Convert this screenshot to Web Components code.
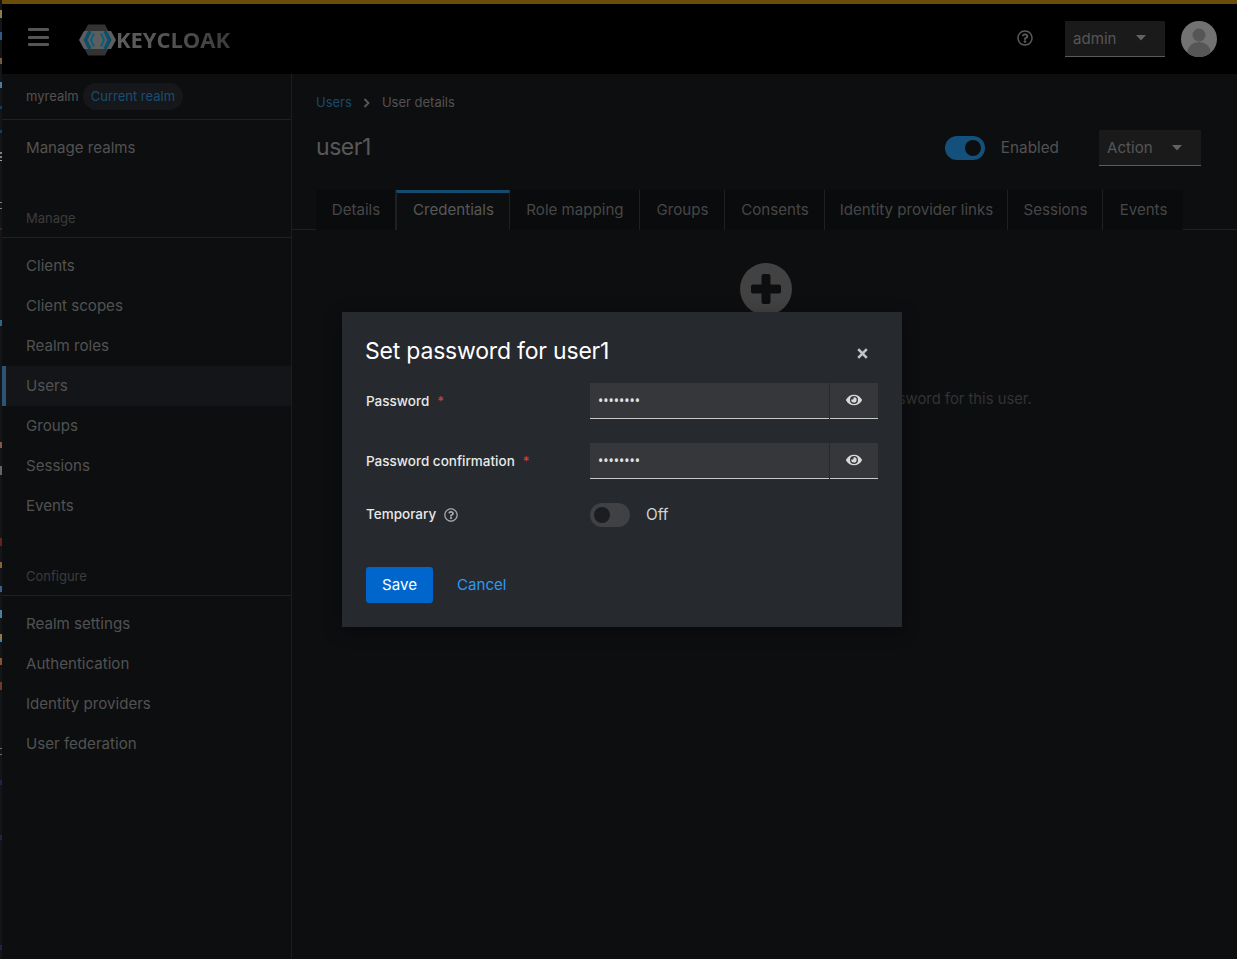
<!DOCTYPE html>
<html lang="en">
<head>
<meta charset="utf-8">
<title>Keycloak</title>
<style>
    html, body { margin: 0; height: 100%; background: #0d0e10; overflow: hidden; }
    body { font-family: Inter, "Liberation Sans", sans-serif; }
</style>
</head>
<body>
<kc-app></kc-app>

<script>
const ICONS = {
    eye: '<svg viewBox="0 0 576 512" width="16" height="16" fill="currentColor"><path d="M572.52 241.4C518.29 135.59 410.93 64 288 64S57.68 135.64 3.48 241.41a32.35 32.35 0 0 0 0 29.19C57.71 376.41 165.07 448 288 448s230.32-71.64 284.52-177.41a32.35 32.35 0 0 0 0-29.19zM288 400a144 144 0 1 1 144-144 143.93 143.93 0 0 1-144 144zm0-240a95.31 95.31 0 0 0-25.31 3.79 47.85 47.85 0 0 1-66.9 66.9A95.78 95.78 0 1 0 288 160z"/></svg>',
    help: '<svg viewBox="0 0 512 512" width="100%" height="100%" fill="currentColor"><path d="M256 8C119.043 8 8 119.083 8 256c0 136.997 111.043 248 248 248s248-111.003 248-248C504 119.083 392.957 8 256 8zm0 448c-110.532 0-200-89.431-200-200 0-110.495 89.472-200 200-200 110.491 0 200 89.471 200 200 0 110.53-89.431 200-200 200zm107.244-255.2c0 67.052-72.421 68.084-72.421 92.863V300c0 6.627-5.373 12-12 12h-45.647c-6.627 0-12-5.373-12-12v-8.659c0-35.745 27.1-50.034 47.579-61.516 17.561-9.845 28.324-16.541 28.324-29.579 0-17.246-21.999-28.693-39.784-28.693-23.189 0-33.894 10.977-48.942 29.969-4.057 5.12-11.46 6.071-16.666 2.124l-27.824-21.098c-5.107-3.872-6.251-11.066-2.644-16.363C184.846 131.491 214.94 112 261.794 112c49.071 0 101.45 38.304 101.45 88.8zM298 368c0 23.159-18.841 42-42 42s-42-18.841-42-42 18.841-42 42-42 42 18.841 42 42z"/></svg>',
    caret: '<svg viewBox="0 0 10 6" width="10" height="6" fill="currentColor"><path d="M0 0h10L5 5.6z"/></svg>'
};

class KcDropdown extends HTMLElement {
    constructor() {
        super();
        this.attachShadow({ mode: 'open' });
        this.shadowRoot.innerHTML = `
            <style>
                :host { display: inline-flex; align-items: center; justify-content: space-between; box-sizing: border-box;
                    height: 36px; padding: 0 19px 0 8px; background: #1a1a1a; border-bottom: 1px solid #5b5b5b;
                    color: #565656; font-size: 15.1px; }
                svg { color: #636363; display: block; }
            </style>
            <slot></slot>${ICONS.caret}
        `;
    }
}

class KcSwitch extends HTMLElement {
    constructor() {
        super();
        this.attachShadow({ mode: 'open' });
        this.shadowRoot.innerHTML = `
            <style>
                :host { display: inline-flex; align-items: center; gap: 16px; font-size: 15.3px; color: var(--switch-label, #525252); }
                .track { width: 40px; height: 24px; border-radius: 12px; background: var(--switch-track, #14507c); flex: none;
                    display: flex; align-items: center; padding: 0 4px; box-sizing: border-box; }
                :host([on]) .track { justify-content: flex-end; }
                .knob { width: 16px; height: 16px; border-radius: 50%; background: var(--switch-knob, #0d0e10); }
                .text { padding-bottom: 2px; }
            </style>
            <span class="track"><span class="knob"></span></span><span class="text"><slot></slot></span>
        `;
    }
}

class KcMasthead extends HTMLElement {
    constructor() {
        super();
        this.attachShadow({ mode: 'open' });
        this.shadowRoot.innerHTML = `
            <style>
                :host { display: flex; align-items: center; height: 70px; background: #000; flex: none; padding: 0 20px 0 28px; box-sizing: border-box; }
                .burger { width: 21px; display: grid; gap: 4.5px; margin-top: -4px; }
                .burger i { display: block; height: 3px; background: #555; border-radius: 1px; }
                .logo { display: flex; align-items: center; margin-left: 30px; margin-top: 1px; }
                .word { font: 700 22px "Open Sans", sans-serif; letter-spacing: -.05px; margin-top: -2px;
                    background: linear-gradient(90deg, #5e5e5e 0, #565656 40%, #3a3a3a 100%); -webkit-background-clip: text; background-clip: text; color: transparent; }
                .right { margin-left: auto; display: flex; align-items: center; }
                .help { width: 16px; height: 16px; color: #5a5a5a; margin-right: 32px; margin-top: -3px; }
                kc-dropdown { width: 100px; margin-top: -1px; }
                .avatar { margin-left: 16px; display: block; }
            </style>
            <div class="burger"><i></i><i></i><i></i></div>
            <div class="logo">
                <svg width="37" height="32" viewBox="0 0 37 32">
                    <path d="M9 .5h17l8 15.5-8 15.5H9L1 16z" fill="#333"/>
                    <path d="M0 16 5 7h27l5 9-5 9H5z" fill="#5e5e5e"/>
                    <path d="M11 7 6.500 16l4.500 9M26 7l4.500 9-4.500 9" fill="none" stroke="#0c4f6a" stroke-width="3.600"/>
                    <path d="M15 9.500 12 16l3 6.500M22 9.500l3 6.500-3 6.500" fill="none" stroke="#0b5f7c" stroke-width="2"/>
                </svg>
                <span class="word">KEYCLOAK</span>
            </div>
            <div class="right">
                <div class="help">${ICONS.help}</div>
                <kc-dropdown>admin</kc-dropdown>
                <svg class="avatar" width="36" height="36" viewBox="0 0 36 36">
                    <defs><clipPath id="c"><circle cx="18" cy="18" r="18"/></clipPath></defs>
                    <circle cx="18" cy="18" r="18" fill="#727272"/>
                    <g clip-path="url(#c)" fill="#565656"><circle cx="18" cy="14" r="6.500"/><ellipse cx="18" cy="31" rx="11.500" ry="10"/></g>
                </svg>
            </div>
        `;
    }
}

class KcSidebar extends HTMLElement {
    constructor() {
        super();
        this.attachShadow({ mode: 'open' });
        const item = (label, active) => `<a class="item${active ? ' active' : ''}">${label}</a>`;
        const section = (title, labels) => `
            <div class="title">${title}</div>
            <div class="group">${labels.map(l => item(l, l === 'Users')).join('')}</div>`;
        this.shadowRoot.innerHTML = `
            <style>
                :host { display: block; width: 292px; flex: none; box-sizing: border-box; border-right: 1px solid #1c1d20; font-size: 15.1px; color: #525252; }
                .realm { height: 46px; box-sizing: border-box; border-bottom: 1px solid #1f2023; display: flex; align-items: center; padding-left: 26px; font-size: 13px; }
                .realm > span:first-child { padding-bottom: 2px; }
                .chip { margin-left: 4px; height: 27px; box-sizing: border-box; padding: 0 8px 2px; border-radius: 14px; background: #15171a; color: #1a4d70; display: flex; align-items: center; }
                .group { margin-top: 7px; }
                .item { display: flex; align-items: center; height: 40px; padding-left: 26px; }
                .item.active { background: linear-gradient(transparent 1px, #141518 1px); box-shadow: 0 1px 0 #141518; position: relative; }
                .item.active::before { content: ""; position: absolute; left: 0; top: 0; bottom: -1px; width: 6px; background: #0d0e10; }
                .item.active::after { content: ""; position: absolute; left: 2px; top: 1px; bottom: -1px; width: 4px; background: #2c5574; }
                .title { height: 71px; box-sizing: border-box; display: flex; align-items: flex-end; padding: 0 0 8px 26px; border-bottom: 1px solid #1f2023; font-size: 13px; line-height: 21px; color: #3c3c3c; }
            </style>
            <div class="realm"><span>myrealm</span><span class="chip">Current realm</span></div>
            <div class="group">${item('Manage realms')}</div>
            ${section('Manage', ['Clients', 'Client scopes', 'Realm roles', 'Users', 'Groups', 'Sessions', 'Events'])}
            ${section('Configure', ['Realm settings', 'Authentication', 'Identity providers', 'User federation'])}
        `;
    }
}

class KcTabs extends HTMLElement {
    constructor() {
        super();
        this.attachShadow({ mode: 'open' });
        const tabs = [['Details', 80], ['Credentials', 114, true], ['Role mapping', 130], ['Groups', 85], ['Consents', 100],
            ['Identity provider links', 183], ['Sessions', 95], ['Events', 80]];
        this.shadowRoot.innerHTML = `
            <style>
                :host { display: flex; height: 40px; box-sizing: border-box; padding-left: 24px; border-bottom: 1px solid #1f2023; font-size: 15.1px; color: #474747; }
                .tab { display: flex; align-items: center; justify-content: center; height: 40px; box-sizing: border-box; background: #0a0b0d; border-right: 1px solid #1f2023; white-space: nowrap; padding: 0 0 2px 1px; }
                .tab:last-child { border-right: 0; }
                .tab.on { background: #0d0e10; color: #585858; border-left: 1px solid #1f2023; border-top: 3px solid #144b6e; padding-bottom: 5px; }
            </style>
            ${tabs.map(([label, w, on]) => `<div class="tab${on ? ' on' : ''}" style="width:${w}px">${label}</div>`).join('')}
        `;
    }
}

class KcUserPage extends HTMLElement {
    constructor() {
        super();
        this.attachShadow({ mode: 'open' });
        this.shadowRoot.innerHTML = `
            <style>
                :host { display: block; flex: 1; min-width: 0; color: #525252; }
                .crumbs { display: flex; align-items: center; padding: 18px 0 0 24px; font-size: 13px; line-height: 21px; }
                .crumbs a { color: #1a4a6b; }
                .crumbs svg { margin: 0 12px 0 11px; }
                .head { display: flex; align-items: center; padding: 17px 36px 0 24px; height: 36px; }
                h1 { margin: -2px 0 0; font: 400 23px Inter, sans-serif; color: #585858; letter-spacing: -.45px; }
                kc-switch { margin-left: auto; }
                kc-dropdown { width: 102px; margin-left: 40px; }
                kc-tabs { margin-top: 24px; }
                .empty { display: flex; flex-direction: column; align-items: center; padding: 33px 0 0 3px; }
                .plus { width: 52px; height: 52px; border-radius: 50%; background: #424242; display: flex; align-items: center; justify-content: center; }
                p { margin: 72px 0 0; font-size: 14.8px; line-height: 24px; color: #333; white-space: nowrap; }
            </style>
            <div class="crumbs"><a>Users</a>
                <svg width="7" height="10" viewBox="0 0 7 10"><path d="M1.500 1l4 4-4 4" fill="none" stroke="#5a5a5a" stroke-width="1.800"/></svg>
                <span>User details</span></div>
            <div class="head">
                <h1>user1</h1>
                <kc-switch on>Enabled</kc-switch>
                <kc-dropdown>Action</kc-dropdown>
            </div>
            <kc-tabs></kc-tabs>
            <div class="empty">
                <div class="plus"><svg width="32" height="32" viewBox="0 0 32 32"><path d="M11.500 3a2 2 0 0 1 2-2h5a2 2 0 0 1 2 2v8.500H29a2 2 0 0 1 2 2v5a2 2 0 0 1-2 2h-8.500V29a2 2 0 0 1-2 2h-5a2 2 0 0 1-2-2v-8.500H3a2 2 0 0 1-2-2v-5a2 2 0 0 1 2-2h8.500z" fill="#0d0e10"/></svg></div>
                <p>This user does not have any credentials. You can set password for this user.</p>
            </div>
        `;
    }
}

class KcPasswordField extends HTMLElement {
    constructor() {
        super();
        this.attachShadow({ mode: 'open' });
        this.shadowRoot.innerHTML = `
            <style>
                :host { display: flex; gap: 1px; height: 36px; width: 288px; }
                input { flex: 1; min-width: 0; box-sizing: border-box; height: 36px; border: 0; border-bottom: 1px solid #c8c8c8; background: #36373b;
                    color: #e0e0e0; padding: 0 8px; font: 14px "Noto Sans", sans-serif; outline: 0; }
                button { width: 48px; height: 36px; box-sizing: border-box; border: 0; border-bottom: 1px solid #c8c8c8; background: #36373b; color: #d8d8d8;
                    display: flex; align-items: center; justify-content: center; padding: 0 0 2px; }
            </style>
            <input type="password" value="password"><button>${ICONS.eye}</button>
        `;
    }
}

class KcPasswordModal extends HTMLElement {
    constructor() {
        super();
        this.attachShadow({ mode: 'open' });
        this.shadowRoot.innerHTML = `
            <style>
                :host { display: block; position: absolute; left: 342px; top: 312px; width: 560px; box-sizing: border-box; padding: 24px; background: #26292d;
                    color: #e0e0e0; box-shadow: 0 4px 16px rgba(0,0,0,.4); font-size: 15.1px; }
                header { display: flex; align-items: center; justify-content: space-between; height: 30px; margin-bottom: 17px; }
                h2 { margin: 0 0 0 -1px; font: 400 23px Inter, sans-serif; letter-spacing: -.2px; color: #fff; }
                .close { margin: 4px 10px 0 0; display: block; }
                .form { display: grid; grid-template-columns: 224px 1fr; row-gap: 24px; align-items: center; }
                label { font-size: 13.5px; font-weight: 500; color: #e8e8e8; display: flex; align-items: center; white-space: nowrap; }
                .top { align-self: start; padding-top: 10px; }
                .req { color: #c9413a; margin-left: 8px; font-size: 13px; }
                .q { width: 14px; height: 14px; color: #a8a8a8; margin: 2px 0 0 8px; }
                .temp { margin-bottom: 3px; }
                kc-switch { --switch-label: #d4d4d4; --switch-track: #3f4145; --switch-knob: #1b1d21; }
                footer { display: flex; align-items: center; gap: 24px; margin-top: 40px; }
                .save { height: 36px; width: 67px; box-sizing: border-box; padding-bottom: 2px; background: #0066cc; border-radius: 3px; color: #fff; display: flex; align-items: center; justify-content: center; }
                .cancel { color: #2b9af3; padding-bottom: 2px; }
            </style>
            <header>
                <h2>Set password for user1</h2>
                <svg class="close" width="11" height="11" viewBox="0 0 11 11"><path d="M1.200 1.200l8.600 8.600M9.800 1.200l-8.600 8.600" stroke="#c4c4c4" stroke-width="2.600"/></svg>
            </header>
            <div class="form">
                <label class="top">Password<span class="req">*</span></label><kc-password-field></kc-password-field>
                <label class="top">Password confirmation<span class="req">*</span></label><kc-password-field></kc-password-field>
                <label class="temp">Temporary<span class="q">${ICONS.help}</span></label><kc-switch>Off</kc-switch>
            </div>
            <footer><span class="save">Save</span><span class="cancel">Cancel</span></footer>
        `;
    }
}

// one to two pixels of coloured noise down the left edge of the window
const EDGE_NOISE = [[10, 18, '#8a7a50'], [32, 40, '#2e5a84'], [58, 64, '#6e5c3a'], [82, 88, '#487ca0'], [106, 109, '#1c3a66'],
    [130, 133, '#1c3a66'], [152, 154, '#808080'], [156, 158, '#808080'], [160, 161, '#a0a0a0'], [202, 203, '#808080'], [208, 209, '#808080'],
    [228, 230, '#4a1c1c'], [320, 326, '#2e6688'], [442, 448, '#80584c'], [466, 475, '#666'], [538, 546, '#622618'],
    [562, 568, '#8c6234'], [586, 592, '#3c608c'], [610, 618, '#4a80a0'], [634, 640, '#8a7a50'], [640, 642, '#2e8ca0'],
    [658, 665, '#805434'], [682, 690, '#6e3a26'], [748, 749, '#707070'], [754, 755, '#707070'], [780, 785, '#1c2448'],
    [835, 840, '#1c2448'], [945, 950, '#1c2448']];

class KcApp extends HTMLElement {
    constructor() {
        super();
        this.attachShadow({ mode: 'open' });
        const stops = ['#141518 0'];
        EDGE_NOISE.forEach(([from, to, colour]) => {
            stops.push(`#141518 ${from}px`, `${colour} ${from}px`, `${colour} ${to}px`, `#141518 ${to}px`);
        });
        this.shadowRoot.innerHTML = `
            <style>
                :host { display: flex; flex-direction: column; position: relative; height: 959px; background: #0d0e10; overflow: hidden; }
                .strip { height: 4px; margin-left: 2px; background: #6b4d0a; flex: none; }
                .main { display: flex; flex: 1; min-height: 0; }
                .edge { position: absolute; left: 0; top: 0; bottom: 0; width: 2px; background: linear-gradient(180deg, ${stops.join(', ')}); }
            </style>
            <div class="strip"></div>
            <kc-masthead></kc-masthead>
            <div class="main"><kc-sidebar></kc-sidebar><kc-user-page></kc-user-page></div>
            <kc-password-modal></kc-password-modal>
            <div class="edge"></div>
        `;
    }
}

customElements.define('kc-dropdown', KcDropdown);
customElements.define('kc-switch', KcSwitch);
customElements.define('kc-masthead', KcMasthead);
customElements.define('kc-sidebar', KcSidebar);
customElements.define('kc-tabs', KcTabs);
customElements.define('kc-user-page', KcUserPage);
customElements.define('kc-password-field', KcPasswordField);
customElements.define('kc-password-modal', KcPasswordModal);
customElements.define('kc-app', KcApp);
</script>
</body>
</html>
